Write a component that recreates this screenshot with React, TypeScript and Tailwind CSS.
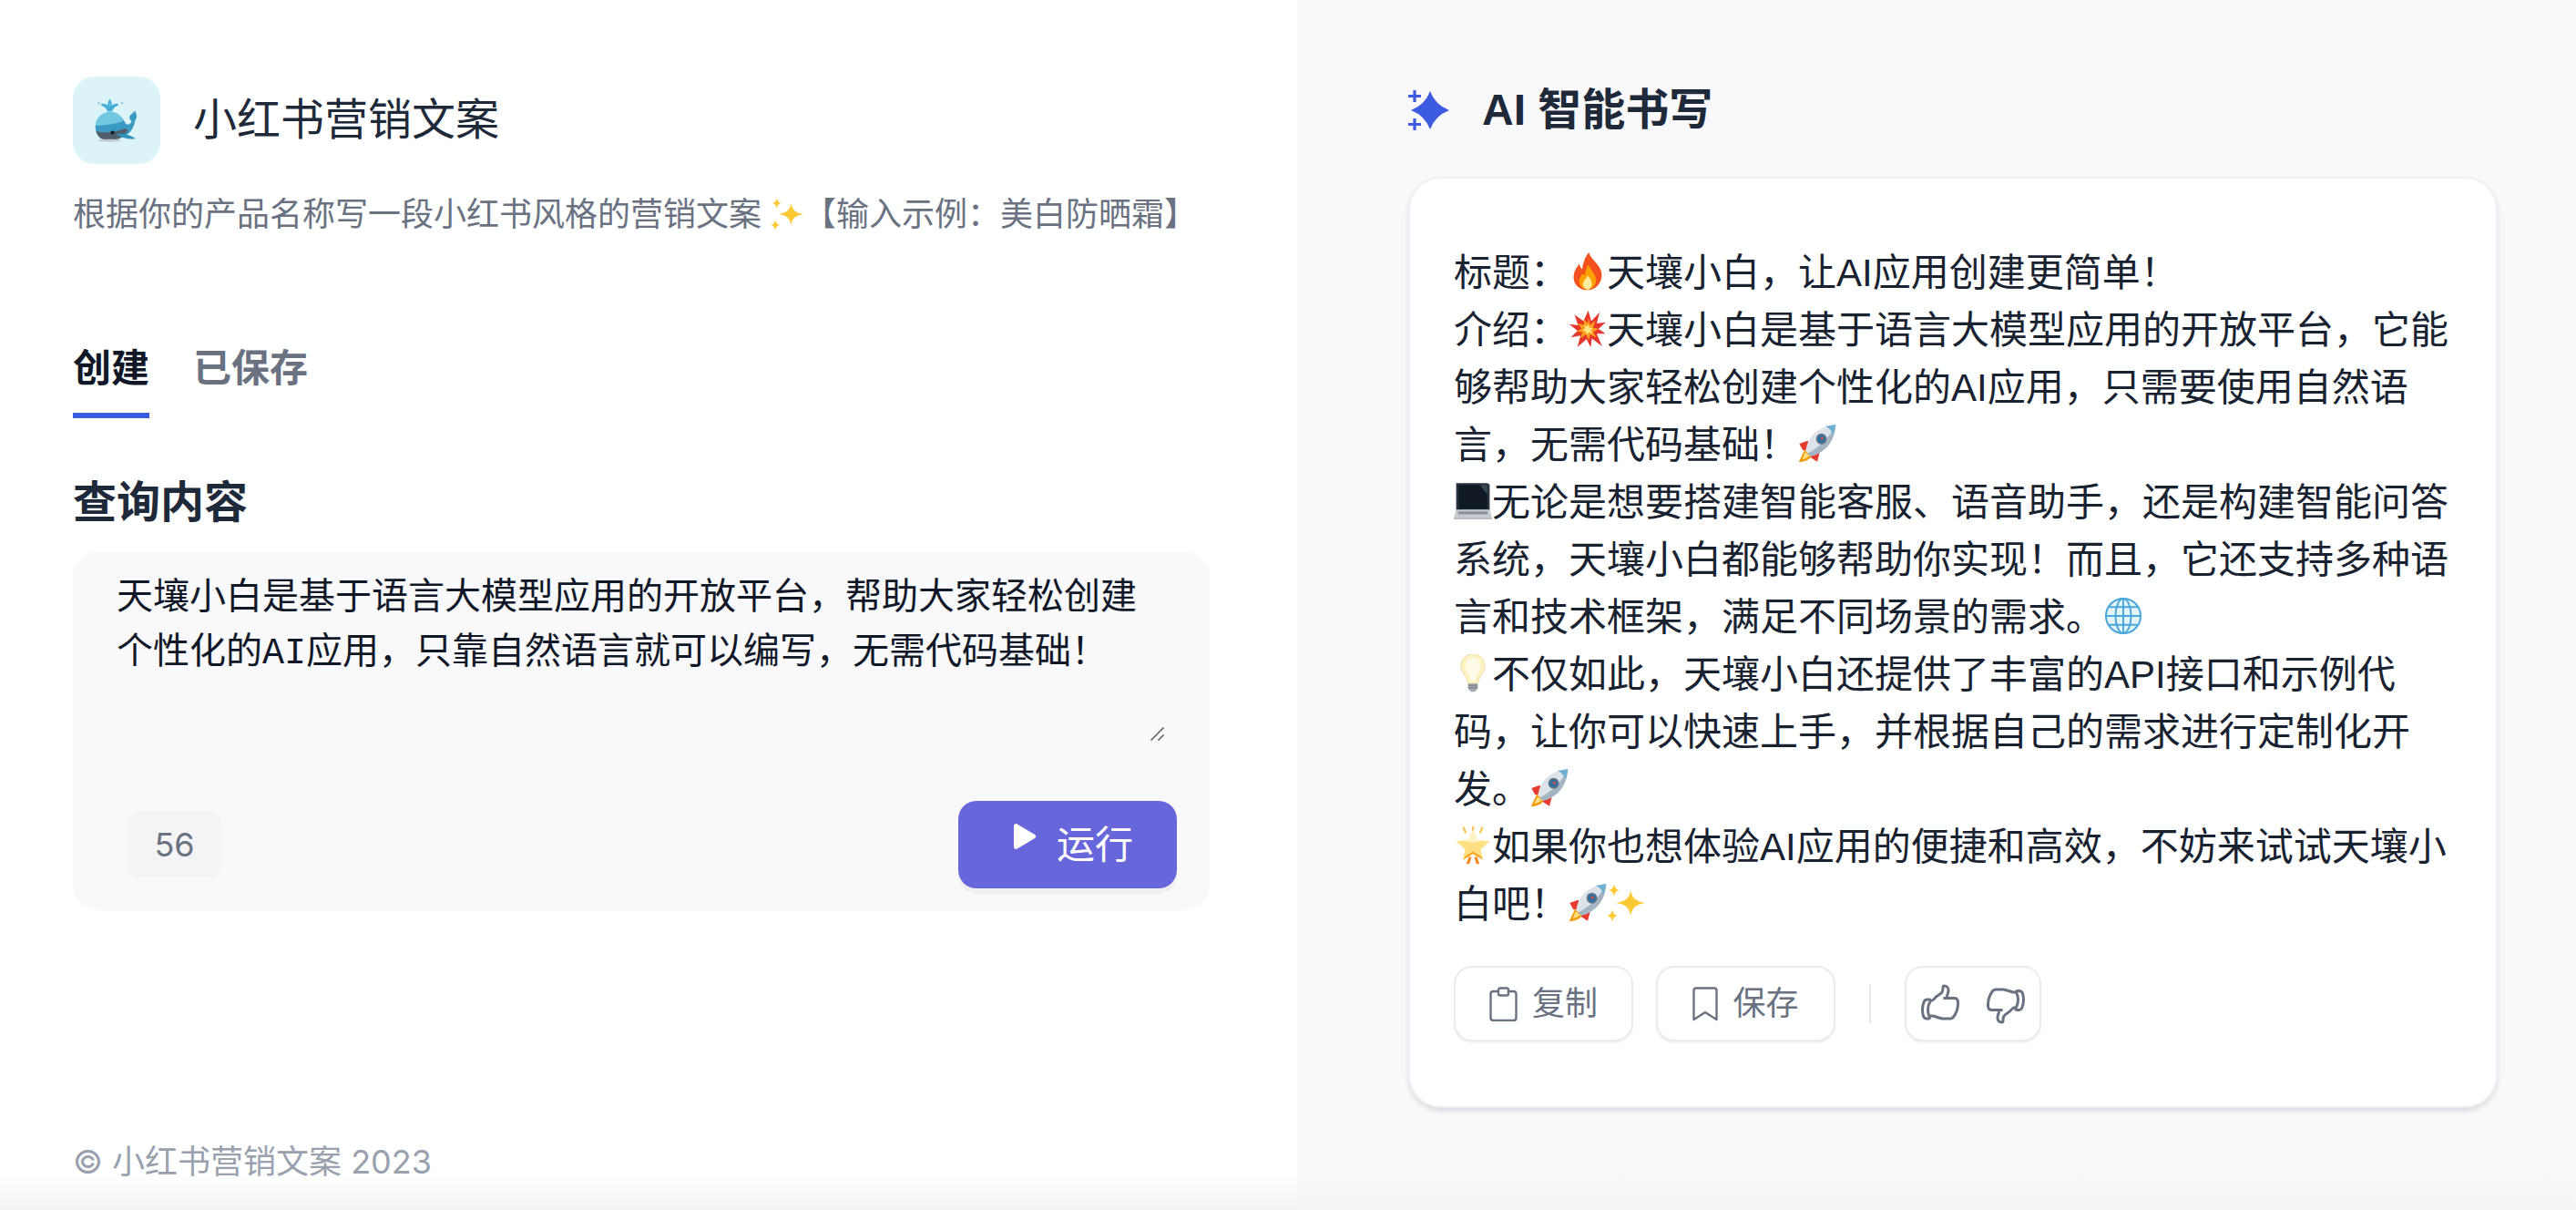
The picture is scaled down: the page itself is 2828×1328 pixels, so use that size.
import type { ReactNode } from "react";
import { HiOutlineHandThumbUp, HiOutlineHandThumbDown } from "react-icons/hi2";

const emojiClass = "inline-block w-[1em] h-[1em] align-[-0.13em]";

function Whale({ className }: { className?: string }) {
  return (
    <svg className={className} viewBox="0 0 64 64">
      <path d="M22 19c-1-7-6-11-12-10 4 1 8 4 10 10M22 19c1-7 6-11 12-10-4 1-8 4-10 10M22 18c-2-6-2-12 0-15 2 3 2 9 0 15" fill="none" stroke="#45aed8" strokeWidth="2.6" />
      <path d="M5 6l2 2M39 6l2 2" stroke="#7cc8e6" strokeWidth="2.4" />
      <path d="M1 42C1 29 11 20 23 20c10 0 16 6 22 16 2 4 7 2 9-2-4-4-4-9 0-11l5-5c3 6 3 11 0 15-2 12-9 21-21 25-9 3-24 3-31-1-4-4-6-9-6-15z" fill="#3a9ac4" />
      <path d="M1 40C2 28 11 20 23 20c9 0 15 5 19 13C30 38 14 39 1 40z" fill="#74c7e2" />
      <path d="M2 48c10 3 28 2 42-4l5 2c-3 6-8 10-14 13-8 2-20 3-27-1-3-3-5-6-6-10z" fill="#535e6c" />
      <path d="M32 52c9-1 20 1 28 7-9 1-20 0-28-7z" fill="#2f93c0" />
      <circle cx="26" cy="50" r="2.8" fill="#14181f" />
      <ellipse cx="22" cy="61.500" rx="17" ry="2" fill="#c4c8d0" />
    </svg>
  );
}

function Sparkles({ className }: { className?: string }) {
  return (
    <svg className={className} viewBox="8 2 48 60" preserveAspectRatio="none" fill="#fcc934">
      <path d="M38 12c2 13 6 17 18 20-12 3-16 7-18 20-2-13-6-17-18-20 12-3 16-7 18-20z" />
      <path d="M17 2c1 7 3 9 7 10-4 1-6 3-7 10-1-7-3-9-7-10 4-1 6-3 7-10z" />
      <path d="M15 42c1 7 3 9 7 10-4 1-6 3-7 10-1-7-3-9-7-10 4-1 6-3 7-10z" />
    </svg>
  );
}

function Fire({ className }: { className?: string }) {
  return (
    <svg className={className} viewBox="0 0 64 64">
      <path d="M34 0c2 10 18 20 21 33 3 16-9 30-23 30S6 53 9 36c1-7 6-12 9-17 1 4 2 7 5 9 1-10 5-21 11-28z" fill="#f4511e" />
      <path d="M33 20c2 7 12 15 13 25 1 10-7 17-14 17s-15-6-14-16c1-5 4-8 6-11 1 2 2 3 3 4 0-6 3-13 6-19z" fill="#ffa000" />
      <path d="M32 38c2 4 7 8 7 14 0 6-3 10-7 10s-8-4-8-9c0-6 6-9 8-15z" fill="#ffeb9c" />
    </svg>
  );
}

function Boom({ className }: { className?: string }) {
  return (
    <svg className={className} viewBox="0 0 64 64">
      <path d="M33 1l5 18L52 4l-5 19 15-2-12 11 12 8-15 0 9 21-17-13-2 15-7-14-15 13 5-19-16 3 11-11L1 24l15 2-6-18 15 11z" fill="#e5362b" />
      <path d="M33 13l3 12 9-7-4 12 10 2-10 5 6 10-11-6-2 10-5-10-9 7 3-11-10 0 9-6-7-8 11 2-1-10 7 8z" fill="#ff9f1c" />
      <path d="M33 24l2 6 6 0-4 4 3 6-6-3-3 5-2-6-6-1 5-4-2-6 5 3z" fill="#ffe98a" />
    </svg>
  );
}

function Rocket({ className }: { className?: string }) {
  return (
    <svg className={className} viewBox="0 0 64 64">
      <path d="M11 42L1 63c9-1 17-3 22-10z" fill="#f39c12" />
      <path d="M12 46L7 58c5-1 9-3 12-6z" fill="#ffe082" />
      <path d="M16 27L2 32l6 11 14-2zM36 47l-4 15-11-7 3-13z" fill="#e53b30" />
      <path d="M13 44C15 22 32 3 63 0c-2 31-20 48-42 53z" fill="#dde3e8" />
      <path d="M63 0c-2 31-20 48-42 53l-5-5C35 39 52 22 63 0z" fill="#a4b4c2" />
      <path d="M45 3c5 1 11 7 14 14L63 0z" fill="#6fb0d4" />
      <circle cx="39" cy="24" r="9" fill="#5d7486" />
      <circle cx="39" cy="24" r="6" fill="#2b6ea3" />
      <circle cx="40" cy="23" r="2.4" fill="#e14b3b" />
    </svg>
  );
}

function Laptop({ className }: { className?: string }) {
  return (
    <svg className={className} viewBox="0 0 64 64">
      <path d="M4 2h52l4 2v44H4z" fill="#26323f" />
      <path d="M8 5h48v40H8z" fill="#111a24" />
      <path d="M44 5h12v16z" fill="#3b4856" />
      <path d="M4 46h56l4 14H0z" fill="#c5cbd1" />
      <path d="M8 49h48l1 5H7z" fill="#8b949d" />
      <path d="M0 60h64v2H0z" fill="#9aa2aa" />
    </svg>
  );
}

function Globe({ className }: { className?: string }) {
  return (
    <svg className={className} viewBox="0 0 64 64" fill="none" stroke="#4aa8d8" strokeWidth="3">
      <circle cx="32" cy="32" r="29" fill="#e4f4fb" />
      <ellipse cx="32" cy="32" rx="13" ry="29" />
      <path d="M32 3v58M3 32h58M8 17h48M8 47h48" />
    </svg>
  );
}

function Bulb({ className }: { className?: string }) {
  return (
    <svg className={className} viewBox="0 0 64 64">
      <path d="M32 0c-12 0-20 9-20 20 0 11 10 16 12 29h16c2-13 12-18 12-29C52 9 44 0 32 0z" fill="#fdf3c0" stroke="#e9dca6" strokeWidth="1.5" />
      <path d="M32 6c-8 0-13 6-13 14 0 8 8 14 9 25h8c1-11 9-17 9-25 0-8-5-14-13-14z" fill="#fffbe6" />
      <path d="M24 49h16v9l-5 5h-6l-5-5z" fill="#a3a9b2" />
      <path d="M24 52h16M24 56h16" stroke="#6e747d" strokeWidth="1.5" />
    </svg>
  );
}

function GlowingStar({ className }: { className?: string }) {
  return (
    <svg className={className} viewBox="0 0 64 64">
      <path d="M16 1l4 10M48 1l-4 10M32 0v7" stroke="#f6c453" strokeWidth="3.5" fill="none" />
      <path d="M25 51l-4 12h5l4-12zM39 51l4 12h-5l-4-12z" fill="#f58a1f" />
      <path d="M32 6l8 17 20 2-15 13 4 18-17-10-17 10 4-18L4 25l20-2z" fill="#ffe082" />
      <path d="M32 42l12 7 5 7-17-10-17 10 5-7z" fill="#f9a825" />
      <path d="M32 6l8 17 8 1-16 3-16-3 8-1z" fill="#fff3c4" />
    </svg>
  );
}

function SparkleIcon() {
  return (
    <svg className="w-[45px] h-[44px]" viewBox="0 0 45 44" fill="#3d5be0">
      <path d="M24 1Q29.500 16 45 22Q29.500 28 24 43Q18.500 28 3 22Q18.500 16 24 1z" />
      <path d="M5.400 0h3.200v4.900H14v3.200H8.600V13H5.400V8.100H0V4.900h5.400zM5.400 31h3.200v4.900H14v3.200H8.600V44H5.400v-4.900H0v-3.200h5.400z" />
    </svg>
  );
}

function ClipboardIcon() {
  return (
    <svg className="w-[31px] h-[38px]" viewBox="0 0 31 38" fill="none" stroke="#6b7280" strokeWidth="2.4" strokeLinejoin="round">
      <path d="M10 5H4.500C2.800 5 1.500 6.300 1.500 8v26c0 1.700 1.300 3 3 3h22c1.700 0 3-1.300 3-3V8c0-1.700-1.300-3-3-3H21" />
      <rect x="10" y="1.500" width="11" height="8" rx="2" />
    </svg>
  );
}

function BookmarkIcon() {
  return (
    <svg className="w-[28px] h-[38px]" viewBox="0 0 28 38" fill="none" stroke="#6b7280" strokeWidth="2.4" strokeLinejoin="round">
      <path d="M1.500 36V4c0-1.500 1-2.500 2.500-2.500h20c1.500 0 2.500 1 2.500 2.500v32L14 28z" />
    </svg>
  );
}

function PlayIcon() {
  return (
    <svg className="w-[26px] h-[30px] mb-[18px]" viewBox="0 0 26 30" fill="#ffffff">
      <path d="M1 3.500C1 1.500 3 .5 4.700 1.500l19.300 11.500c1.500 1 1.500 3 0 4L4.700 28.500C3 29.500 1 28.500 1 26.500z" />
    </svg>
  );
}

function ActionButton({ icon, label }: { icon: ReactNode; label: string }) {
  return (
    <button className="flex items-center justify-center gap-[16px] w-[197px] h-[83px] rounded-[20px] border-2 border-[#ebebed] bg-white shadow-[0_2px_2px_rgba(16,24,40,0.05)] text-[36px] text-gray-500">
      {icon}
      {label}
    </button>
  );
}

export default function App() {
  return (
    <div
      lang="zh-CN"
      className="relative flex w-full h-screen overflow-hidden bg-white font-['Liberation_Sans','Noto_Sans_CJK_SC',sans-serif]"
    >
      {/* left: form */}
      <div className="flex flex-col w-[1424px] shrink-0 pl-[80px] pr-[96px] pt-[84px]">
        <div className="flex items-center gap-[36px]">
          <div className="flex items-center justify-center w-[96px] h-[96px] rounded-[24px] bg-[#dcf3f7]">
            <Whale className="w-[48px] h-[48px]" />
          </div>
          <h1 className="text-[48px] leading-[64px] text-gray-800">小红书营销文案</h1>
        </div>
        <p className="mt-[29px] text-[36px] leading-[54px] text-gray-500 whitespace-nowrap">
          根据你的产品名称写一段小红书风格的营销文案 <Sparkles className={emojiClass} />【输入示例：美白防晒霜】
        </p>

        <div className="flex gap-[48px] mt-[114px]">
          <div className="pb-[20px] border-b-[6px] border-[#3d5be0] text-[42px] leading-[56px] font-semibold text-gray-900">创建</div>
          <div className="text-[42px] leading-[56px] font-semibold text-gray-500">已保存</div>
        </div>

        <h2 className="mt-[61px] text-[48px] leading-[64px] font-semibold text-gray-800">查询内容</h2>

        <div className="mt-[22px] rounded-[28px] bg-[#f9f9fc]">
          <div className="relative px-[48px] pt-[22px]">
            <textarea
              readOnly
              value="天壤小白是基于语言大模型应用的开放平台，帮助大家轻松创建个性化的AI应用，只靠自然语言就可以编写，无需代码基础！"
              className="block w-full h-[188px] resize-none bg-transparent outline-none text-[40px] leading-[60px] text-gray-900 font-['Liberation_Mono','Noto_Sans_CJK_SC',monospace]"
            />
            {/* resize grip */}
            <svg className="absolute right-[50px] bottom-[3px] w-[15px] h-[15px]" viewBox="0 0 15 15" fill="none" stroke="#55565c" strokeWidth="1.5">
              <path d="M0.500 14.500L14.500 0.500M8.500 14.500L14.500 8.500" />
            </svg>
          </div>
          <div className="flex items-center justify-between mt-[63px] pl-[60px] pr-[36px] pb-[24px]">
            <div className="flex items-center justify-center w-[103px] h-[72px] rounded-[12px] bg-[#f4f4f6] text-[36px] text-gray-500 font-['Inter',sans-serif]">56</div>
            <button className="flex items-center gap-[22px] w-[240px] h-[96px] pl-[60px] rounded-[20px] bg-[#6866db] shadow-[0_6px_0_rgba(16,24,40,0.04)] text-[42px] text-white">
              <PlayIcon />
              运行
            </button>
          </div>
        </div>

        <div className="mt-auto pb-[29px] text-[36px] leading-[48px] text-gray-400 font-['Inter','Noto_Sans_CJK_SC',sans-serif]">© 小红书营销文案 2023</div>
      </div>

      {/* right: result */}
      <div className="flex flex-col flex-1 pl-[122px] pr-[86px] pt-[91px] bg-[#f9f9fc]">
        <div className="flex items-center gap-[36px] h-[60px]">
          <SparkleIcon />
          <h2 className="text-[48px] leading-[60px] font-semibold text-gray-800">AI 智能书写</h2>
        </div>

        <div className="mt-[43px] rounded-[36px] border-2 border-[#f0f0f2] bg-white pl-[48px] pr-[48px] pt-[72px] pb-[71px] shadow-[0_4px_6px_-1px_rgba(16,24,40,0.14)]">
          <div className="text-[42px] leading-[63px] text-[#182230]">
            <div>标题：<Fire className={emojiClass} />天壤小白，让AI应用创建更简单！</div>
            <div>介绍：<Boom className={emojiClass} />天壤小白是基于语言大模型应用的开放平台，它能够帮助大家轻松创建个性化的AI应用，只需要使用自然语言，无需代码基础！<Rocket className={emojiClass} /></div>
            <div><Laptop className={emojiClass} />无论是想要搭建智能客服、语音助手，还是构建智能问答系统，天壤小白都能够帮助你实现！而且，它还支持多种语言和技术框架，满足不同场景的需求。<Globe className={emojiClass} /></div>
            <div><Bulb className={emojiClass} />不仅如此，天壤小白还提供了丰富的API接口和示例代码，让你可以快速上手，并根据自己的需求进行定制化开发。<Rocket className={emojiClass} /></div>
            <div><GlowingStar className={emojiClass} />如果你也想体验AI应用的便捷和高效，不妨来试试天壤小白吧！<Rocket className={emojiClass} /><Sparkles className={emojiClass} /></div>
          </div>

          <div className="flex items-center mt-[36px]">
            <ActionButton icon={<ClipboardIcon />} label="复制" />
            <div className="ml-[25px]">
              <ActionButton icon={<BookmarkIcon />} label="保存" />
            </div>
            <div className="w-[2px] h-[42px] mx-[37px] bg-[#e5e7eb]" />
            <div className="flex items-center justify-center gap-[24px] w-[150px] h-[83px] rounded-[20px] border-2 border-[#ebebed] bg-white shadow-[0_2px_2px_rgba(16,24,40,0.05)] text-gray-500">
              <HiOutlineHandThumbUp className="w-[48px] h-[48px]" />
              <HiOutlineHandThumbDown className="w-[48px] h-[48px]" />
            </div>
          </div>
        </div>
      </div>

      {/* faint fade along the bottom edge */}
      <div className="absolute inset-x-0 bottom-0 h-[40px] pointer-events-none bg-linear-to-t from-[#f3f4f6] to-transparent" />
    </div>
  );
}
